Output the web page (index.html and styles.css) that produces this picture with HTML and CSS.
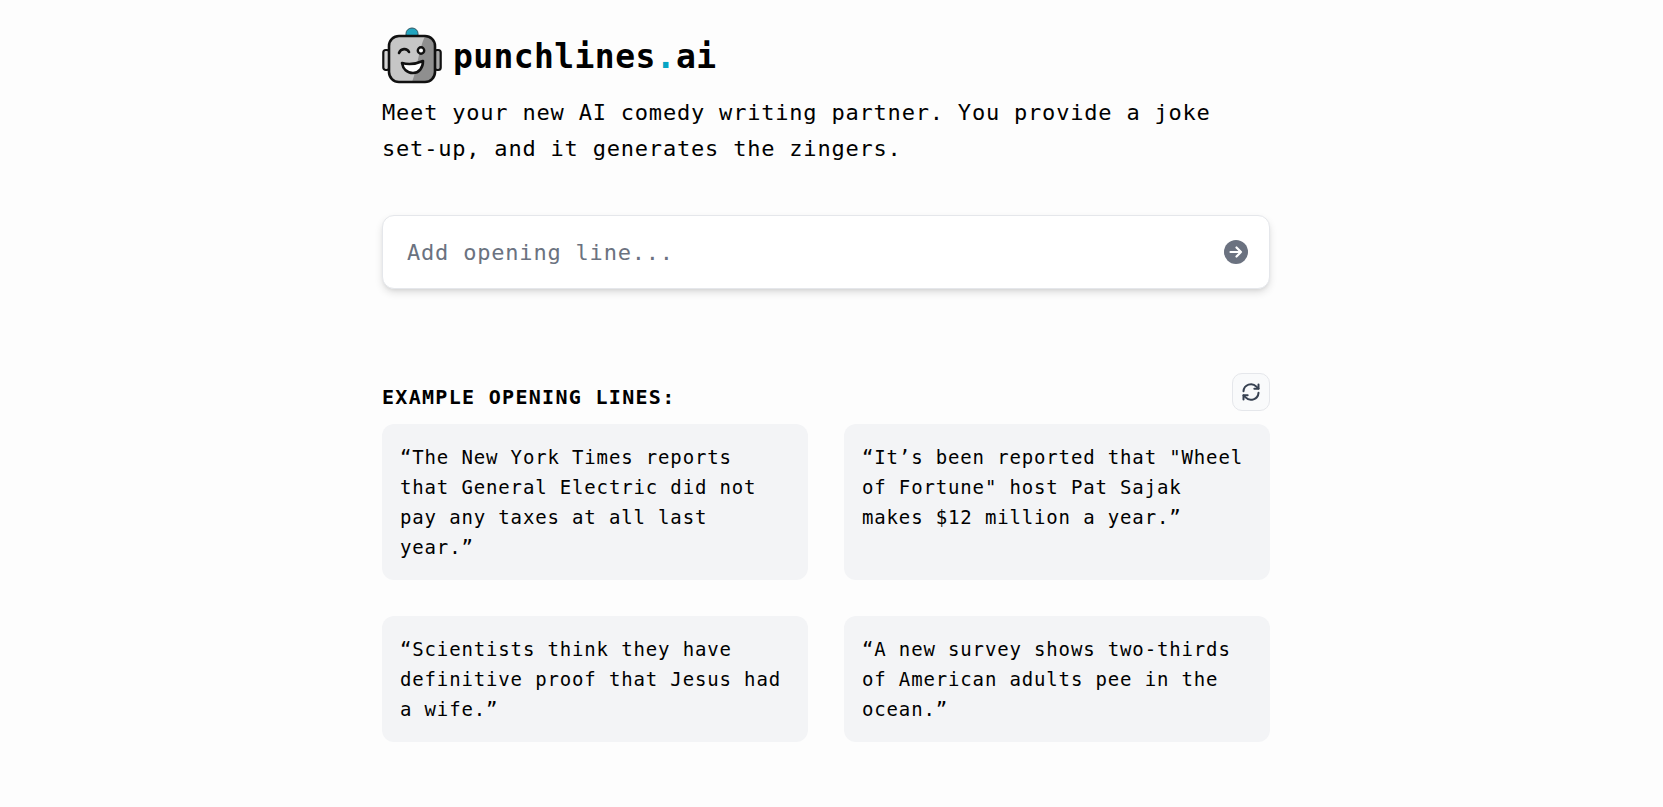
FILE: index.html
```html
<!DOCTYPE html>
<html lang="en">
<head>
    <meta charset="UTF-8">
    <meta name="viewport" content="width=device-width, initial-scale=1.0">
    <title>punchlines.ai</title>
    <link rel="stylesheet" href="styles.css">
</head>
<body>
    <main class="container">
        <!-- Logo -->
        <div class="brand">
            <svg class="logo" width="60" height="58" viewBox="0 0 60 58">
                <path d="M24 9v-2.500a6 5.500 0 0 1 12 0v2.500z" fill="#22a5c0" stroke="#2f5560" stroke-width="1"/>
                <rect x="1.300" y="23" width="6" height="20" rx="2.500" fill="#d4d4d4" stroke="#111" stroke-width="2.200"/>
                <rect x="52.700" y="23" width="6" height="20" rx="2.500" fill="#a8a8a8" stroke="#111" stroke-width="2.200"/>
                <rect x="7" y="9" width="46" height="46" rx="10" fill="#c6c6c6"/>
                <path d="M43 9h1a9 9 0 0 1 9 9v28a9 9 0 0 1-9 9H30C36 40 36 24 43 9z" fill="#8f8f8f"/>
                <rect x="7" y="9" width="46" height="46" rx="10" fill="none" stroke="#111" stroke-width="2.600"/>
                <path d="M17 26c2-5 8-5 10-1" fill="none" stroke="#111" stroke-width="2.600" stroke-linecap="round"/>
                <circle cx="39" cy="23.500" r="3.200" fill="#fff" stroke="#111" stroke-width="2.400"/>
                <path d="M20 36c7 2 14 1 21-2 0 7-4 12-10 12-6 0-10-4-11-10z" fill="#fff" stroke="#111" stroke-width="2.600" stroke-linejoin="round"/>
            </svg>
            <h1 class="brand-name">punchlines<span class="dot">.</span>ai</h1>
        </div>
        <p class="tagline">Meet your new AI comedy writing partner. You provide a joke set-up, and it generates the zingers.</p>

        <!-- Opening line input -->
        <form class="prompt">
            <input class="prompt-input" type="text" placeholder="Add opening line...">
            <button class="prompt-send" type="button" aria-label="Submit">
                <svg width="24" height="24" viewBox="0 0 24 24">
                    <circle cx="12" cy="12" r="12" fill="#6b7280"/>
                    <path d="M6.500 12h10.500M12.500 7.500l4.500 4.500-4.500 4.500" fill="none" stroke="#fff" stroke-width="2.200" stroke-linecap="round" stroke-linejoin="round"/>
                </svg>
            </button>
        </form>

        <!-- Examples -->
        <div class="examples-head">
            <h2 class="examples-title">EXAMPLE OPENING LINES:</h2>
            <button class="refresh" type="button" aria-label="Refresh">
                <svg width="20" height="20" viewBox="0 0 24 24" fill="none" stroke="#374151" stroke-width="2.400" stroke-linecap="round" stroke-linejoin="round">
                    <path d="M3 11a9 9 0 0 1 15.500-5.500L21 8"/>
                    <path d="M21 3v5h-5"/>
                    <path d="M21 13a9 9 0 0 1-15.500 5.500L3 16"/>
                    <path d="M3 21v-5h5"/>
                </svg>
            </button>
        </div>
        <div class="examples">
            <div class="card">“The New York Times reports that General Electric did not pay any taxes at all last year.”</div>
            <div class="card">“It’s been reported that "Wheel of Fortune" host Pat Sajak makes $12 million a year.”</div>
            <div class="card">“Scientists think they have definitive proof that Jesus had a wife.”</div>
            <div class="card">“A new survey shows two-thirds of American adults pee in the ocean.”</div>
        </div>
    </main>
</body>
</html>
```

FILE: styles.css
```css
/* Base */
body {
    margin: 0;
    background-color: #fdfdfd;
    color: #000;
    font-family: 'DejaVu Sans Mono', 'Liberation Mono', monospace;
    min-height: 807px;
}

.container {
    width: 888px;
    margin-left: 382px;
    padding-top: 27px;
}

/* Header */
.brand {
    display: flex;
    align-items: center;
    gap: 11px;
    height: 58px;
}

.logo {
    flex: none;
}

.brand-name {
    margin: 0;
    font-size: 33px;
    font-weight: 700;
    letter-spacing: 0.4px;
    line-height: 1;
}

.dot {
    color: #06a5c4;
}

.tagline {
    margin: 10px 0 0;
    font-size: 22px;
    line-height: 36px;
    letter-spacing: 0.8px;
    width: 860px;
}

/* Input */
.prompt {
    display: flex;
    align-items: center;
    height: 74px;
    margin-top: 48px;
    padding: 0 21px 0 24px;
    box-sizing: border-box;
    background-color: #fff;
    border: 1px solid #e5e7eb;
    border-radius: 12px;
    box-shadow: 0 4px 8px -1px rgba(0, 0, 0, 0.14), 0 2px 4px -2px rgba(0, 0, 0, 0.1);
}

.prompt-input {
    flex: 1;
    border: none;
    outline: none;
    background: none;
    padding: 0;
    font-family: inherit;
    font-size: 22px;
    letter-spacing: 0.8px;
    color: #111;
}

.prompt-input::placeholder {
    color: #6b7280;
    opacity: 1;
}

.prompt-send {
    display: flex;
    padding: 0;
    border: none;
    background: none;
}

/* Examples */
.examples-head {
    display: flex;
    justify-content: space-between;
    align-items: flex-end;
    margin-top: 84px;
}

.examples-title {
    margin: 0;
    padding-bottom: 2px;
    font-size: 20px;
    font-weight: 700;
    line-height: 24px;
    letter-spacing: 1.3px;
}

.refresh {
    display: flex;
    align-items: center;
    justify-content: center;
    width: 38px;
    height: 38px;
    padding: 0;
    background-color: #f9fafb;
    border: 1px solid #e5e7eb;
    border-radius: 10px;
}

.examples {
    display: grid;
    grid-template-columns: 426px 426px;
    column-gap: 36px;
    row-gap: 36px;
    margin-top: 13px;
}

.card {
    padding: 18px;
    background-color: #f3f4f6;
    border-radius: 12px;
    font-size: 19px;
    line-height: 30px;
    letter-spacing: 0.85px;
}
```
